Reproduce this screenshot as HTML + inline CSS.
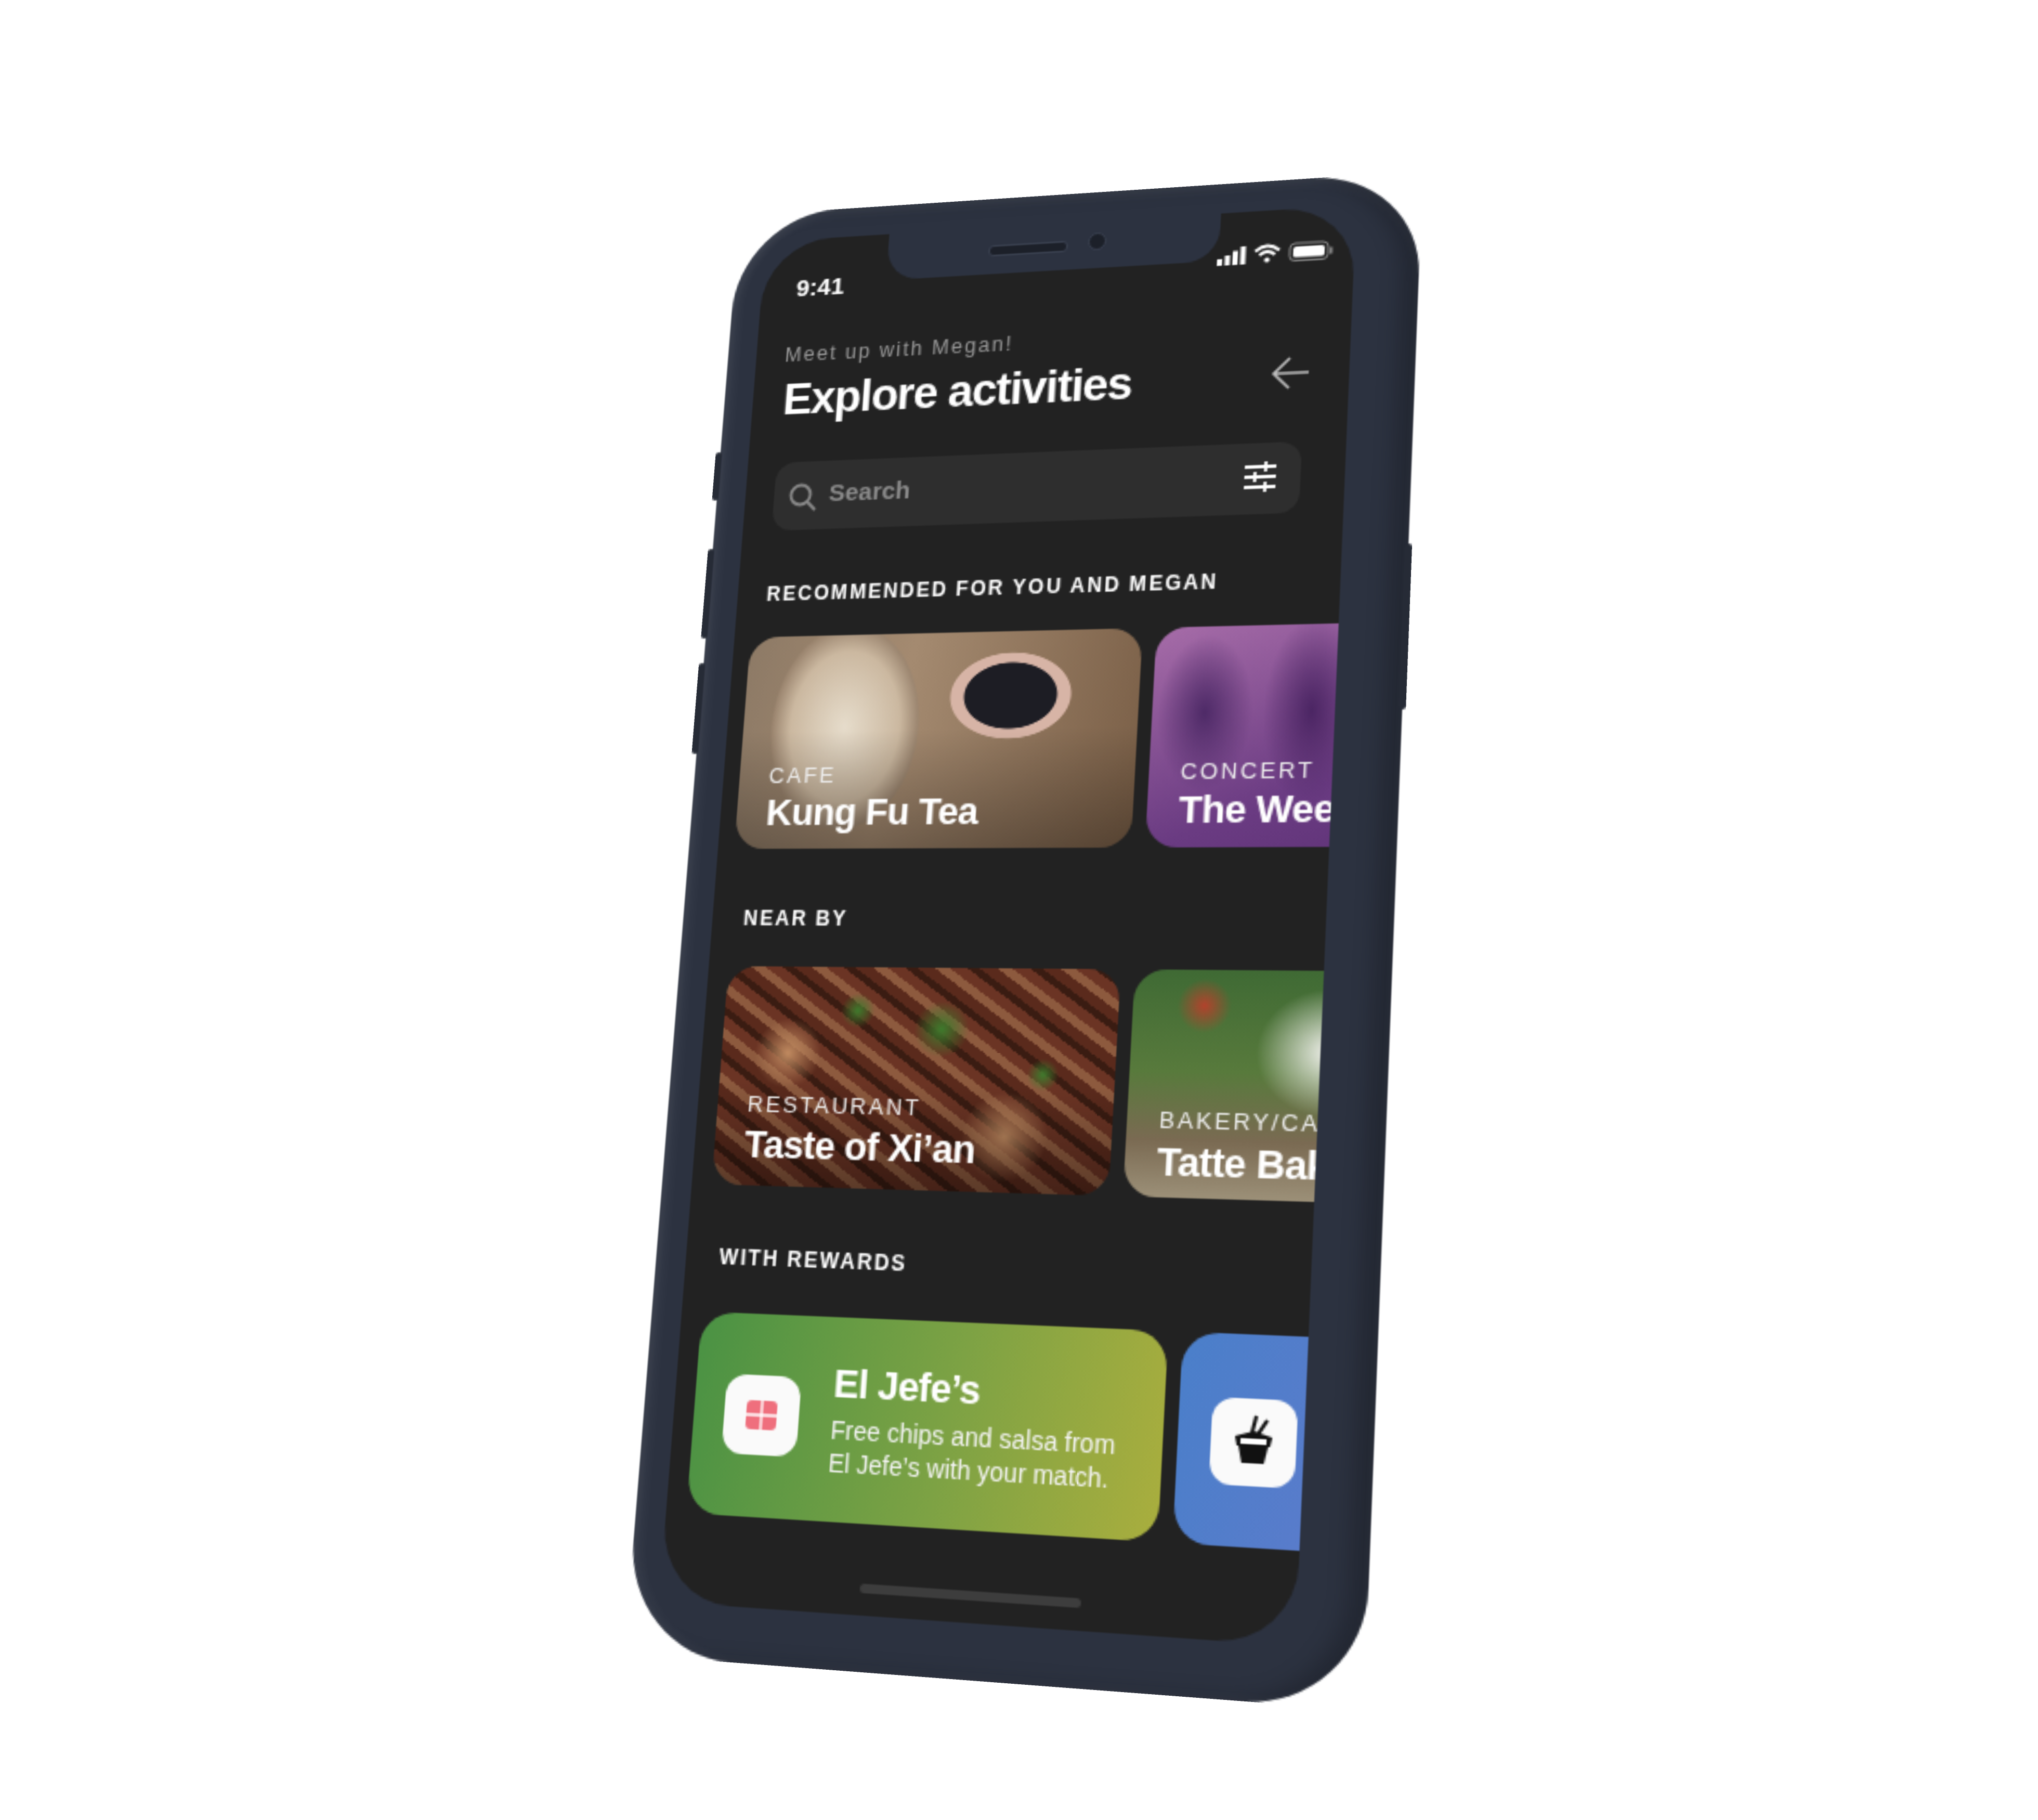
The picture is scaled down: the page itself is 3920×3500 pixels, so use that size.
<!DOCTYPE html>
<html><head><meta charset="utf-8"><style>
html,body{margin:0;padding:0;width:3920px;height:3500px;background:#fff;overflow:hidden;font-family:"Liberation Sans",sans-serif}
#phone{position:absolute;left:0;top:0;width:411px;height:850px;transform-origin:0 0;
transform:matrix(3.198,-0.2078,-0.2602,3.2552,1422.4,414.6)}
.body{position:absolute;left:0;top:0;width:411px;height:850px;border-radius:62px;background:#2c3240;
box-shadow:inset 4px 0 6px rgba(255,255,255,.06),inset -10px 0 12px rgba(0,0,0,.22),inset 0 4px 6px rgba(255,255,255,.05)}
.btn{position:absolute;background:#262b36;border-radius:2px}
.screen{position:absolute;left:18px;top:18px;width:356px;height:802px;border-radius:42px;background:#222222;overflow:hidden;color:#fff}
.notch{position:absolute;left:78px;top:-2px;width:200px;height:31px;background:#2c3240;border-radius:0 0 20px 20px}
.abs{position:absolute;white-space:nowrap}
.card{position:absolute;border-radius:18px;overflow:hidden}
.cat{position:absolute;left:18px;font-size:13px;letter-spacing:1.6px;color:#eee}
.ttl{position:absolute;left:18px;font-size:22px;font-weight:bold;letter-spacing:-.4px}
.hd{font-size:12px;font-weight:bold;letter-spacing:1.3px}
</style></head><body>
<div id="phone">
 <div class="body"></div>
 <div class="btn" style="left:-3px;top:150px;width:4px;height:30px"></div>
 <div class="btn" style="left:-3px;top:210px;width:4px;height:55px"></div>
 <div class="btn" style="left:-3px;top:280px;width:4px;height:55px"></div>
 <div class="btn" style="left:409px;top:220px;width:4px;height:95px"></div>
 <div class="screen">
  <div class="notch"></div>
  <div class="abs" style="left:140px;top:11px;width:46px;height:5px;border-radius:3px;background:#1c2029;border:1px solid #3a4150"></div>
  <div class="abs" style="left:200px;top:7px;width:9px;height:9px;border-radius:50%;background:#1c2029;border:1px solid #3a4150"></div>
  <div class="abs" style="left:22px;top:23px;font-size:15px;font-weight:bold">9:41</div>
  <svg class="abs" style="left:277px;top:19px" width="70" height="14" viewBox="0 0 70 14">
   <rect x="0" y="9" width="3" height="4" fill="#fff"/><rect x="4.5" y="7" width="3" height="6" fill="#fff"/><rect x="9" y="4.5" width="3" height="8.5" fill="#fff"/><rect x="13.5" y="2" width="3" height="11" fill="#fff"/>
   <path d="M22 5.5 Q29 -0.5 36 5.5 M24.5 8 Q29 4 33.5 8" stroke="#fff" stroke-width="1.8" fill="none"/><circle cx="29" cy="11" r="1.6" fill="#fff"/>
   <rect x="42" y="2" width="22" height="10.5" rx="3" fill="none" stroke="#888" stroke-width="1"/><rect x="44" y="4" width="18" height="6.5" rx="1.5" fill="#fff"/><rect x="65" y="5.5" width="1.5" height="4" fill="#888"/>
  </svg>
  <div class="abs" style="left:18px;top:66px;font-size:12.5px;letter-spacing:1.3px;color:#9a9a9a">Meet up with Megan!</div>
  <div class="abs" style="left:19px;top:85px;font-size:27.5px;font-weight:bold;letter-spacing:-.8px">Explore activities</div>
  <svg class="abs" style="left:311px;top:88px" width="24" height="22" viewBox="0 0 24 22"><path d="M22 11H2M11 2L2 11l9 9" stroke="#bbb" stroke-width="1.6" fill="none"/></svg>
  <div class="abs" style="left:18px;top:140px;width:313px;height:42px;border-radius:12px;background:#2e2e2e"></div>
  <svg class="abs" style="left:27px;top:153px" width="18" height="18" viewBox="0 0 18 18"><circle cx="7.5" cy="7.5" r="6" stroke="#888" stroke-width="1.8" fill="none"/><path d="M12 12l5 5" stroke="#888" stroke-width="1.8"/></svg>
  <div class="abs" style="left:52px;top:152px;font-size:15px;font-weight:bold;color:#8a8a8a">Search</div>
  <svg class="abs" style="left:298px;top:150px" width="20" height="20" viewBox="0 0 20 20" stroke="#fff" stroke-width="1.8"><path d="M1 4h18M1 10h18M1 16h18"/><path d="M13 1v6M7 7v6M13 13v6"/></svg>
  <div class="abs hd" style="left:18px;top:214px">RECOMMENDED FOR YOU AND MEGAN</div>
  <div class="card" style="left:10px;top:247px;width:235px;height:127px;background:
   radial-gradient(ellipse 45px 32px at 160px 38px,#1d1d24 0 60%,#d7b4a6 62% 78%,transparent 80%),
   radial-gradient(ellipse 55px 75px at 62px 55px,#e6dccb 0,#cbb8a0 60%,#9c8670 80%,transparent 82%),
   linear-gradient(100deg,#8d7a66 0%,#a48a70 40%,#7a5f47 100%)">
   <div style="position:absolute;left:0;right:0;bottom:0;height:70px;background:linear-gradient(transparent,rgba(0,0,0,.3))"></div>
   <div class="cat" style="top:76px">CAFE</div><div class="ttl" style="top:93px">Kung Fu Tea</div></div>
  <div class="card" style="left:253px;top:247px;width:235px;height:127px;background:
   radial-gradient(ellipse 30px 50px at 30px 50px,#4e2a67 0,transparent 90%),radial-gradient(ellipse 30px 60px at 90px 50px,#4b2563 0,transparent 90%),linear-gradient(160deg,#a66ca8,#6a3b82 60%,#5a2f72)">
   <div class="cat" style="top:76px">CONCERT</div><div class="ttl" style="top:93px">The Weeknd</div></div>
  <div class="abs hd" style="left:19px;top:408px">NEAR BY</div>
  <div class="card" style="left:12px;top:443px;width:231px;height:126px;background:
   radial-gradient(circle 16px at 130px 35px,#3e7a2c,transparent),radial-gradient(circle 10px at 80px 25px,#3e7a2c,transparent),radial-gradient(circle 9px at 190px 60px,#3e7a2c,transparent),
   radial-gradient(circle 20px at 40px 50px,#c08a60,transparent),radial-gradient(circle 25px at 170px 95px,#c08a60,transparent),
   repeating-linear-gradient(35deg,#5a2a1c 0 6px,#8d5a3e 6px 11px,#6b3424 11px 17px,#3a1c12 17px 21px),#5a2a1c">
   <div style="position:absolute;left:0;right:0;bottom:0;height:60px;background:linear-gradient(transparent,rgba(0,0,0,.35))"></div>
   <div class="cat" style="top:72px">RESTAURANT</div><div class="ttl" style="top:90px">Taste of Xi’an</div></div>
  <div class="card" style="left:251px;top:443px;width:231px;height:126px;background:
   radial-gradient(ellipse 40px 35px at 110px 45px,#f2f2ee,transparent),radial-gradient(circle 15px at 40px 20px,#b2422c,transparent),
   linear-gradient(180deg,#3f6a34 0%,#587a3c 45%,#7a6a52 75%,#9c9078 100%)">
   <div class="cat" style="top:76px">BAKERY/CAFE</div><div class="ttl" style="top:94px">Tatte Bakery</div></div>
  <div class="abs hd" style="left:20px;top:603px">WITH REWARDS</div>
  <div class="card" style="left:12px;top:641px;width:268px;height:112px;border-radius:20px;background:linear-gradient(100deg,#4a9244,#7da244 55%,#a9ae3e)">
   <div style="position:absolute;left:18px;top:34px;width:44px;height:44px;border-radius:12px;background:#fafafa"></div>
   <svg style="position:absolute;left:30px;top:46px" width="20" height="20" viewBox="0 0 20 20"><rect x="1" y="2" width="18" height="16" rx="3" fill="#ef6f7d"/><path d="M10 2v16M1 10h18" stroke="#fff" stroke-width="1.3"/></svg>
   <div style="position:absolute;left:81px;top:24px;font-size:22px;font-weight:bold;letter-spacing:-.5px">El Jefe’s</div>
   <div style="position:absolute;left:81px;top:53px;font-size:14px;line-height:18px;color:#f4f4f4">Free chips and salsa from<br>El Jefe’s with your match.</div>
  </div>
  <div class="card" style="left:288px;top:641px;width:200px;height:112px;border-radius:20px;background:linear-gradient(110deg,#4a7fca,#6a78cc)">
   <div style="position:absolute;left:18px;top:34px;width:46px;height:46px;border-radius:12px;background:#fafafa"></div>
   <svg style="position:absolute;left:28px;top:42px" width="26" height="28" viewBox="0 0 26 28"><path d="M12 10L14 1M15 11l5-8" stroke="#111" stroke-width="2"/><path d="M3 12l10-3 10 3-1 5H4z" fill="#111"/><path d="M5 17h16l-2 9H7z" fill="#111"/><path d="M6 13h14v3H6z" fill="#fff"/></svg>
  </div>
  <div class="abs" style="left:116px;top:785px;width:124px;height:5px;border-radius:3px;background:#3d3d3d"></div>
 </div>
</div>
<script>
(function(){
var s=[[0,0],[411,0],[0,850],[411,850]],d=[[1422.4,414.6],[2736.7,329.2],[1201.2,3181.5],[2623.6,3289.5]];
var A=[],b=[];
for(var i=0;i<4;i++){var x=s[i][0],y=s[i][1],u=d[i][0],v=d[i][1];
A.push([x,y,1,0,0,0,-u*x,-u*y]);b.push(u);A.push([0,0,0,x,y,1,-v*x,-v*y]);b.push(v);}
var n=8;for(var c=0;c<n;c++){var p=c;for(var r=c+1;r<n;r++)if(Math.abs(A[r][c])>Math.abs(A[p][c]))p=r;
var t=A[c];A[c]=A[p];A[p]=t;t=b[c];b[c]=b[p];b[p]=t;
for(var r=0;r<n;r++){if(r==c)continue;var f=A[r][c]/A[c][c];for(var k=c;k<n;k++)A[r][k]-=f*A[c][k];b[r]-=f*b[c];}}
var h=[];for(var i=0;i<n;i++)h.push(b[i]/A[i][i]);
var m=[h[0],h[3],0,h[6],h[1],h[4],0,h[7],0,0,1,0,h[2],h[5],0,1];
document.getElementById('phone').style.transform='matrix3d('+m.join(',')+')';
})();
</script>
</body></html>
